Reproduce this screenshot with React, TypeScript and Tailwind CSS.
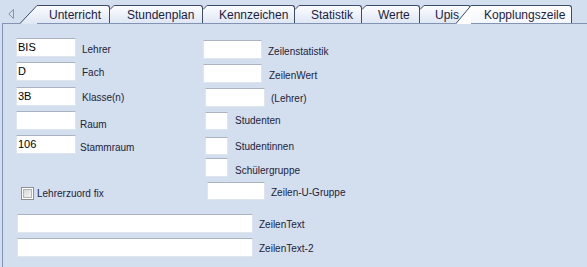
import React from "react";

type Tab = { label: string; width: string; pad: string; active?: boolean };

const tabs: Tab[] = [
  { label: "Unterricht", width: "w-[73px]", pad: "pl-[12px]" },
  { label: "Stundenplan", width: "w-[93px]", pad: "pl-[17px]" },
  { label: "Kennzeichen", width: "w-[92px]", pad: "pl-[16px]" },
  { label: "Statistik", width: "w-[67px]", pad: "pl-[16px]" },
  { label: "Werte", width: "w-[58px]", pad: "pl-[16px]" },
  { label: "Upis", width: "w-[51px]", pad: "pl-[15px]" },
  { label: "Kopplungszeile", width: "w-[101px]", pad: "pl-[13px]", active: true },
];

const TabItem = ({ tab, index }: { tab: Tab; index: number }) => {
  const base = tab.active
    ? "bg-gradient-to-b from-white to-[#f3f6fb]"
    : "bg-gradient-to-b from-[#fbfcfe] to-[#dfe7f4]";
  return (
    <div
      className={`relative flex h-[18px] items-center border-t border-r border-[#3e4c6b] rounded-tr-[3px] text-[12px] leading-[14px] text-[#1c2140] ${base} ${tab.width} ${tab.pad}`}
    >
      {index === 0 && (
        <svg className="absolute left-[-17px] top-[-1px]" width="17" height="19" viewBox="0 0 17 19">
          <defs>
            <linearGradient id="tabfill" x1="0" y1="0" x2="0" y2="1">
              <stop offset="0" stopColor="#fbfcfe" />
              <stop offset="1" stopColor="#dfe7f4" />
            </linearGradient>
          </defs>
          <polygon points="0,19 17,0.5 17,19" fill="url(#tabfill)" />
          <line x1="0" y1="18.5" x2="17" y2="0.5" stroke="#3e4c6b" strokeWidth="1" />
        </svg>
      )}
      {index > 0 && !tab.active && (
        <svg className="absolute left-0 top-[-1px]" width="5" height="5" viewBox="0 0 5 5">
          <polygon points="0,0 4.5,0 0,4.5" fill="#d3deef" />
          <line x1="0" y1="4.5" x2="4" y2="0.5" stroke="#3e4c6b" strokeWidth="1" />
        </svg>
      )}
      {tab.active && (
        <svg className="absolute left-[-15px] top-[-1px]" width="15" height="19" viewBox="0 0 15 19">
          <polygon points="0,19 15,0.5 15,19" fill="#ffffff" />
          <line x1="0" y1="18.5" x2="15" y2="0.5" stroke="#3e4c6b" strokeWidth="1" />
        </svg>
      )}
      <span className="relative">{tab.label}</span>
    </div>
  );
};

const Field = ({ w, h = "h-[19px]", value }: { w: string; h?: string; value?: string }) => (
  <div
    className={`flex shrink-0 items-center bg-white border border-[#dfe5ee] border-t-[#aab3c1] pl-[1px] text-[11px] text-black ${w} ${h}`}
  >
    {value}
  </div>
);

const Label = ({ children, className }: { children: React.ReactNode; className: string }) => (
  <span className={`text-[10px] leading-[12px] whitespace-nowrap text-[#1d2438] ${className}`}>{children}</span>
);

export default function App() {
  return (
    <div className="w-[587px] h-[267px] overflow-hidden bg-[#d3deef] font-['Liberation_Sans',Arial,sans-serif]">
      {/* tab strip */}
      <div className="flex h-[23px] items-end">
        <div className="w-[37px] h-full pl-[8px] pt-[9px]">
          <svg width="6" height="10" viewBox="0 0 6 10">
            <polygon points="5.5,0.5 0.8,5 5.5,9.5" fill="none" stroke="#8e939c" strokeWidth="1" />
          </svg>
        </div>
        {tabs.map((t, i) => (
          <TabItem key={t.label} tab={t} index={i} />
        ))}
      </div>

      {/* panel */}
      <div className="ml-[2px] h-[244px] border-l border-t border-[#8393b3] pl-[13px] pt-[14px]">
        <div className="flex">
          {/* left column */}
          <div className="flex w-[187px] flex-col">
            <div className="flex">
              <Field w="w-[60px]" value="BIS" />
              <Label className="ml-[6px] mt-[6px]">Lehrer</Label>
            </div>
            <div className="mt-[5px] flex">
              <Field w="w-[60px]" value="D" />
              <Label className="ml-[6px] mt-[5px]">Fach</Label>
            </div>
            <div className="mt-[6px] flex">
              <Field w="w-[60px]" value="3B" />
              <Label className="ml-[6px] mt-[5px]">Klasse(n)</Label>
            </div>
            <div className="mt-[5px] flex">
              <Field w="w-[60px]" />
              <Label className="ml-[4px] mt-[8px]">Raum</Label>
            </div>
            <div className="mt-[4px] flex">
              <Field w="w-[60px]" value="106" />
              <Label className="ml-[4px] mt-[7px]">Stammraum</Label>
            </div>
            <div className="mt-[33px] flex items-center pl-[5px]">
              <div className="flex h-[13px] w-[13px] items-center justify-center border border-[#8f8f8f] bg-white">
                <div className="h-[9px] w-[9px] border border-[#b4b4b4] bg-gradient-to-br from-[#d8d8d8] to-[#f4f4f4]" />
              </div>
              <Label className="ml-[3px]">Lehrerzuord fix</Label>
            </div>
          </div>

          {/* right column */}
          <div className="mt-[2px] flex flex-col">
            <div className="flex">
              <Field w="w-[59px]" />
              <Label className="ml-[6px] mt-[6px]">Zeilenstatistik</Label>
            </div>
            <div className="mt-[5px] flex">
              <Field w="w-[59px]" />
              <Label className="ml-[7px] mt-[6px]">ZeilenWert</Label>
            </div>
            <div className="mt-[5px] flex pl-[2px]">
              <Field w="w-[60px]" />
              <Label className="ml-[6px] mt-[5px]">(Lehrer)</Label>
            </div>
            <div className="mt-[5px] flex pl-[2px]">
              <Field w="w-[23px]" h="h-[18px]" />
              <Label className="ml-[7px] mt-[3px]">Studenten</Label>
            </div>
            <div className="mt-[7px] flex pl-[2px]">
              <Field w="w-[23px]" h="h-[18px]" />
              <Label className="ml-[7px] mt-[4px]">Studentinnen</Label>
            </div>
            <div className="mt-[3px] flex pl-[2px]">
              <Field w="w-[23px]" />
              <Label className="ml-[7px] mt-[7px]">Schülergruppe</Label>
            </div>
            <div className="mt-[5px] flex pl-[4px]">
              <Field w="w-[58px]" h="h-[18px]" />
              <Label className="ml-[6px] mt-[5px]">Zeilen-U-Gruppe</Label>
            </div>
          </div>
        </div>

        {/* bottom text rows */}
        <div className="mt-[14px] flex flex-col pl-[1px]">
          <div className="flex">
            <Field w="w-[236px]" />
            <Label className="ml-[6px] mt-[5px]">ZeilenText</Label>
          </div>
          <div className="mt-[5px] flex">
            <Field w="w-[236px]" />
            <Label className="ml-[6px] mt-[5px]">ZeilenText-2</Label>
          </div>
        </div>
      </div>
    </div>
  );
}
